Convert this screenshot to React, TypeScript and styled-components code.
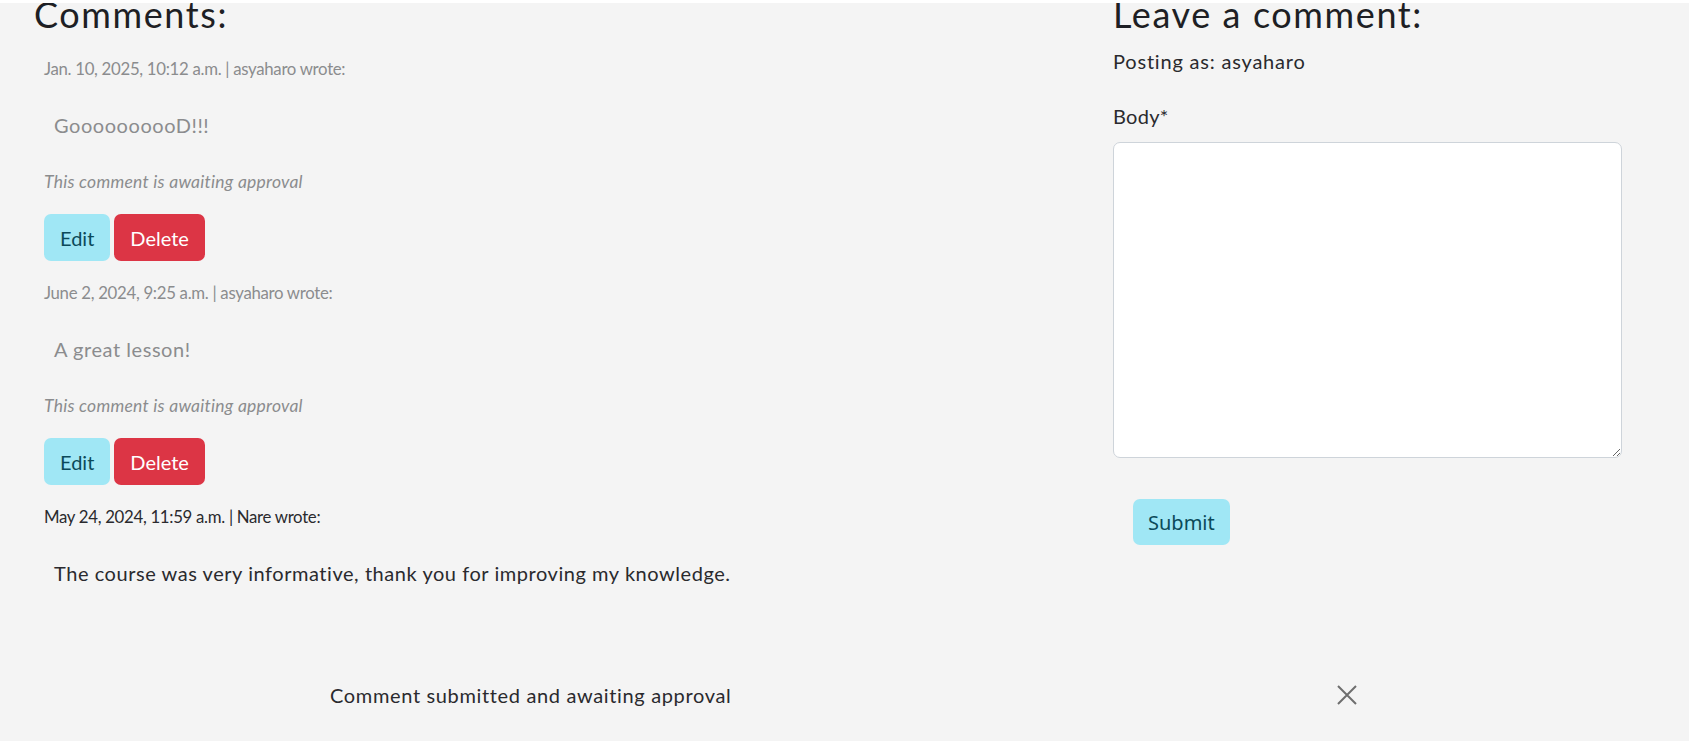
import React from "react";
import styled, { createGlobalStyle } from "styled-components";

const GlobalStyle = createGlobalStyle`
  html, body { margin: 0; padding: 0; background: #ffffff; }
  body { font-family: Lato, "Noto Sans", sans-serif; color: #212529; }
  * { box-sizing: border-box; }
`;

const Page = styled.div`
  min-height: 100vh;
  background: #f4f4f4;
  border-top: 3px solid #ffffff;
  overflow: hidden;
`;

const Main = styled.div`
  display: grid;
  grid-template-columns: 1079px 509px;
  padding-left: 34px;
`;

const Column = styled.section`
  display: flex;
  flex-direction: column;
  align-items: flex-start;
`;

const Heading = styled.h3`
  margin: -10px 0 0;
  font-size: 36px;
  line-height: 42px;
  font-weight: 400;
  letter-spacing: 1.6px;
  color: #1e1f24;
`;

const CommentList = styled.div`
  display: flex;
  flex-direction: column;
  padding-left: 10px;
  margin-top: 21px;
`;

const Comment = styled.article`
  display: flex;
  flex-direction: column;
  align-items: flex-start;
  margin-bottom: 19px;
`;

const Meta = styled.p<{ $faded?: boolean }>`
  margin: 0 0 28px;
  font-size: 16.8px;
  line-height: 26px;
  letter-spacing: -0.3px;
  color: ${(p) => (p.$faded ? "#8b8c8e" : "#2a2a2e")};
`;

const Body = styled.p<{ $faded?: boolean }>`
  margin: 0 0 29px;
  padding-left: 10px;
  font-size: 20px;
  line-height: 30px;
  letter-spacing: 0.55px;
  color: ${(p) => (p.$faded ? "#8b8c8e" : "#2a2a2e")};
`;

const Awaiting = styled.p`
  margin: 0 0 19px;
  font-size: 17.5px;
  line-height: 26px;
  font-style: italic;
  letter-spacing: 0.25px;
  color: #8b8c8e;
`;

const Actions = styled.div`
  display: flex;
  gap: 4px;
`;

const Button = styled.button<{ $variant: "info" | "danger" }>`
  font-family: Lato, "Noto Sans", sans-serif;
  font-size: 20px;
  line-height: 30px;
  padding: 7.5px 15px;
  border: 1px solid transparent;
  border-radius: 7px;
  cursor: pointer;
  background: ${(p) => (p.$variant === "info" ? "#a0e7f5" : "#dc3545")};
  color: ${(p) => (p.$variant === "info" ? "#0b4a5a" : "#ffffff")};
`;

const Posting = styled.p`
  margin: 11px 0 25px;
  font-size: 20px;
  line-height: 30px;
  letter-spacing: 0.8px;
  color: #2a2a2e;
`;

const Form = styled.form`
  display: flex;
  flex-direction: column;
  align-items: flex-start;
  width: 100%;
`;

const Label = styled.label`
  font-size: 20px;
  line-height: 30px;
  letter-spacing: 0.3px;
  color: #2a2a2e;
  margin-bottom: 11px;
`;

const TextArea = styled.textarea`
  width: 509px;
  height: 316px;
  border: 1px solid #ced4da;
  border-radius: 7px;
  background: #ffffff;
  resize: vertical;
  font-family: inherit;
  font-size: 20px;
`;

const SubmitButton = styled.button`
  margin: 41px 0 0 20px;
  font-family: "Noto Sans", "Open Sans", sans-serif;
  font-size: 20px;
  line-height: 29px;
  padding: 7.5px 14px;
  border: 1px solid transparent;
  border-radius: 7px;
  background: #a0e7f5;
  color: #0b4a5a;
  cursor: pointer;
`;

const MessageBar = styled.div`
  display: flex;
  align-items: center;
  justify-content: space-between;
  width: 1027px;
  margin: 44px 0 0 330px;
`;

const MessageText = styled.span`
  font-size: 20px;
  line-height: 30px;
  letter-spacing: 0.65px;
  color: #2a2a2e;
`;

const CloseButton = styled.button`
  display: flex;
  padding: 0;
  border: none;
  background: none;
  cursor: pointer;
`;

type CommentData = {
  meta: string;
  body: string;
  pending: boolean;
};

const comments: CommentData[] = [
  { meta: "Jan. 10, 2025, 10:12 a.m. | asyaharo wrote:", body: "GoooooooooD!!!", pending: true },
  { meta: "June 2, 2024, 9:25 a.m. | asyaharo wrote:", body: "A great lesson!", pending: true },
  {
    meta: "May 24, 2024, 11:59 a.m. | Nare wrote:",
    body: "The course was very informative, thank you for improving my knowledge.",
    pending: false,
  },
];

export default function App() {
  return (
    <>
      <GlobalStyle />
      <Page>
        <Main>
          <Column>
            <Heading>Comments:</Heading>
            <CommentList>
              {comments.map((c) => (
                <Comment key={c.meta}>
                  <Meta $faded={c.pending}>{c.meta}</Meta>
                  <Body $faded={c.pending}>{c.body}</Body>
                  {c.pending && (
                    <>
                      <Awaiting>This comment is awaiting approval</Awaiting>
                      <Actions>
                        <Button $variant="info">Edit</Button>
                        <Button $variant="danger">Delete</Button>
                      </Actions>
                    </>
                  )}
                </Comment>
              ))}
            </CommentList>
          </Column>
          <Column>
            <Heading>Leave a comment:</Heading>
            <Posting>Posting as: asyaharo</Posting>
            <Form onSubmit={(e) => e.preventDefault()}>
              <Label htmlFor="body">Body*</Label>
              <TextArea id="body" />
              <SubmitButton type="submit">Submit</SubmitButton>
            </Form>
          </Column>
        </Main>
        <MessageBar>
          <MessageText>Comment submitted and awaiting approval</MessageText>
          <CloseButton aria-label="Close">
            <svg width="20" height="20" viewBox="0 0 20 20">
              <path d="M1 1 L19 19 M19 1 L1 19" stroke="#6e6e6e" strokeWidth="2" fill="none" />
            </svg>
          </CloseButton>
        </MessageBar>
      </Page>
    </>
  );
}
